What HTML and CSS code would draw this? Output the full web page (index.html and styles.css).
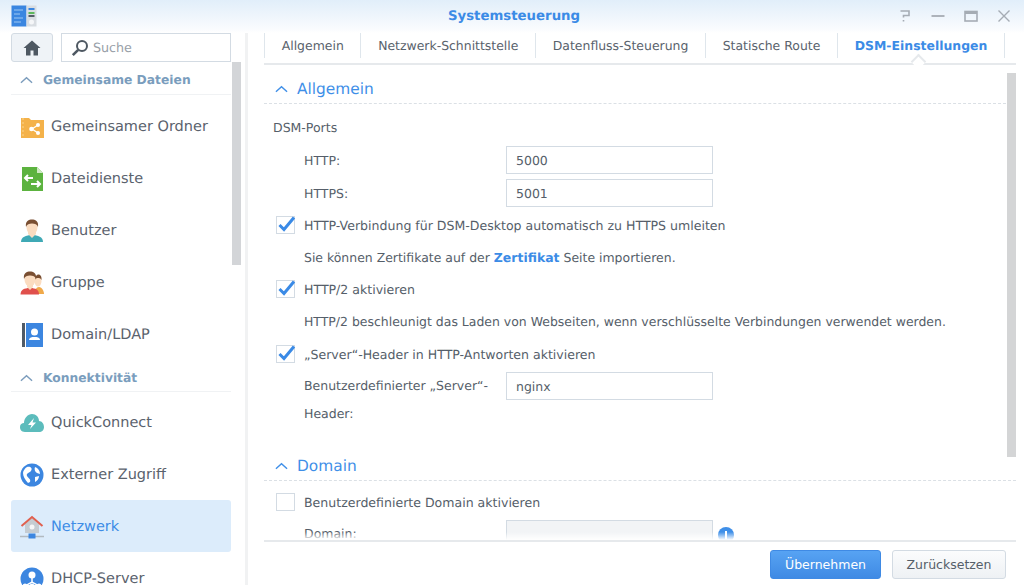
FILE: index.html
```html
<!DOCTYPE html>
<html lang="de">
<head>
<meta charset="utf-8">
<title>Systemsteuerung</title>
<link rel="stylesheet" href="styles.css">
</head>
<body>
<div class="window">
  <header class="titlebar">
    <svg class="app-icon" viewBox="0 0 26 22"><rect x="0.5" y="0.5" width="15" height="21" fill="#3a86e0"/><rect x="15.5" y="0.5" width="10" height="21" fill="#d8dde2"/><path d="M3 5h9M3 9h6M3 13h9M3 17h7" stroke="#9cc7f2" stroke-width="1"/><rect x="17.5" y="3" width="6" height="2" fill="#3a86e0"/><rect x="17.5" y="7" width="6" height="2" fill="#5cb85c"/><rect x="17.5" y="10" width="6" height="2" fill="#555e68"/><circle cx="20.5" cy="17" r="2.5" fill="#f4f6f8"/></svg>
    <h1 class="title">Systemsteuerung</h1>
    <div class="win-controls">
      <svg viewBox="0 0 14 14"><path d="M2.5 2H11V6.5H5.5V8.5M5.5 11V12.5" fill="none" stroke="#a5acb4" stroke-width="1.6"/></svg>
      <svg viewBox="0 0 14 14"><path d="M0.5 7H13.5" stroke="#a5acb4" stroke-width="1.8"/></svg>
      <svg viewBox="0 0 14 14"><rect x="1" y="2.5" width="12" height="9.5" fill="none" stroke="#a5acb4" stroke-width="1.6"/><rect x="1" y="2" width="12" height="3" fill="#a5acb4"/></svg>
      <svg viewBox="0 0 14 14"><path d="M1.5 1.5L12.5 12.5M12.5 1.5L1.5 12.5" stroke="#a5acb4" stroke-width="1.4"/></svg>
    </div>
  </header>

  <div class="body">
    <aside class="sidebar">
      <div class="toolbar">
        <button class="home-btn" aria-label="Start"><svg viewBox="0 0 18 16"><path d="M9 0.5L0.5 8H3V15.5H7.5V10.5H10.5V15.5H15V8H17.5Z" fill="#4e5862"/></svg></button>
        <div class="search">
          <svg viewBox="0 0 18 18"><circle cx="11" cy="7" r="5" fill="none" stroke="#4e5862" stroke-width="2"/><path d="M7.2 10.8L1.8 16.2" stroke="#4e5862" stroke-width="2.6"/></svg>
          <span>Suche</span>
        </div>
      </div>
      <div class="scroll-thumb side-thumb"></div>
      <nav class="nav">
        <div class="nav-head first"><svg class="chev" viewBox="0 0 14 8"><path d="M1 7L7 1.5L13 7" fill="none" stroke="#7b9cbc" stroke-width="1.5"/></svg>Gemeinsame Dateien</div>
        <a class="nav-item"><svg viewBox="0 0 24 24"><path d="M1 3H9L11 5H24V23H1Z" fill="#f4b24a"/><path d="M3 3V23" stroke="#fbd68c" stroke-dasharray="2 2"/><path d="M18 10L12 14L18 18" fill="none" stroke="#fff" stroke-width="1.3"/><circle cx="11.5" cy="14" r="2.3" fill="#fff"/><circle cx="18" cy="10" r="2" fill="#fff"/><circle cx="18" cy="18" r="2" fill="#fff"/></svg>Gemeinsamer Ordner</a>
        <a class="nav-item"><svg viewBox="0 0 24 24"><path d="M2 0H17L23 6V24H2Z" fill="#5cb33f"/><path d="M17 0V6H23Z" fill="#cfe9c3"/><path d="M5 11H13M8 8L5 11L8 14M20 17H11M17 14L20 17L17 20" fill="none" stroke="#fff" stroke-width="2"/></svg>Dateidienste</a>
        <a class="nav-item"><svg viewBox="0 0 24 24"><path d="M1 23C1 18 6 16 12 16S23 18 23 23Z" fill="#3fa9b5"/><path d="M8 15L12 19L16 15L16 12H8Z" fill="#fbdcc0"/><ellipse cx="12" cy="8.500" rx="5.500" ry="7" fill="#fbdcc0"/><path d="M6 8C5 2 9 0.500 12 0.500S19 2 18 8C17 5 15 4.500 12 4.500S7 5 6 8Z" fill="#7a4f32"/></svg>Benutzer</a>
        <a class="nav-item"><svg viewBox="0 0 24 24"><path d="M15 23C15 19 16 16 19 16C22 16 24 20 24 23Z" fill="#f0a94a"/><ellipse cx="18" cy="10" rx="3.500" ry="5.500" fill="#fbdcc0"/><path d="M15 9C15 5 17 3.500 18.500 3.500S22 5 21.500 9C20.500 7 19 7 18 7S16 7 15 9Z" fill="#7a4f32"/><path d="M0.500 23.500C0.500 19 4 17 10 17S19 19 19 23.500Z" fill="#e0504c"/><path d="M7 16L10 19L13 16V13H7Z" fill="#fbdcc0"/><ellipse cx="10" cy="8.500" rx="5.500" ry="7" fill="#fbdcc0"/><path d="M4 8C3 2 7 0.500 10 0.500S17 2 16 8C15 5 13 4.500 10 4.500S5 5 4 8Z" fill="#7a4f32"/></svg>Gruppe</a>
        <a class="nav-item"><svg viewBox="0 0 24 24"><rect x="2" y="0" width="3" height="24" fill="#505a66"/><rect x="6" y="0" width="17" height="24" fill="#3c86e0"/><circle cx="14.500" cy="9" r="3.500" fill="#fff"/><path d="M9 17C9 14.500 12 14 14.500 14S20 14.500 20 17Z" fill="#fff"/></svg>Domain/LDAP</a>
        <div class="nav-head"><svg class="chev" viewBox="0 0 14 8"><path d="M1 7L7 1.500L13 7" fill="none" stroke="#7b9cbc" stroke-width="1.5"/></svg>Konnektivität</div>
        <a class="nav-item"><svg viewBox="0 0 24 24"><path d="M5 21C1 21 0 18 0 16C0 13 2 12 4 12C4 7 8 3 12 3C16 3 19 6 19 10C22 10 24 13 24 16C24 19 22 21 19 21Z" fill="#5cbcbc"/><path d="M14 7L8 14H11.500L10 18L16 11.500H12.500Z" fill="#fff"/></svg>QuickConnect</a>
        <a class="nav-item"><svg viewBox="0 0 24 24"><circle cx="12" cy="12" r="11.500" fill="#3c86e0"/><path d="M7 4C10 3 13 5 11 8C9 10 6 10 7 13C9 16 11 16 10 19L8 20C5 17 3 13 3 10C3 8 5 5 7 4ZM15 4C18 5 20 8 20 11L17 10C15 9 14 6 15 4ZM15 14L19 13C19 16 17 18 15 19Z" fill="#fff"/></svg>Externer Zugriff</a>
        <a class="nav-item active"><svg viewBox="0 0 24 24"><path d="M5 9V18H19V9L12 3Z" fill="#c5ccd2"/><path d="M1.500 11L12 2L22.500 11" fill="none" stroke="#e0604f" stroke-width="2"/><circle cx="12" cy="12" r="2.500" fill="#f4f6f8"/><path d="M0 21.500H24" stroke="#b2bac0" stroke-width="1.500"/><rect x="8.500" y="18.500" width="7" height="5" fill="#3c86e0"/></svg>Netzwerk</a>
        <a class="nav-item"><svg viewBox="0 0 24 24"><circle cx="12" cy="12" r="11.500" fill="#3c86e0"/><circle cx="12" cy="8" r="3.500" fill="#fff"/><path d="M12 11V16M5 19L12 15L19 19" stroke="#fff" stroke-width="1.500" fill="none"/><circle cx="5" cy="19" r="2.500" fill="#fff"/><circle cx="12" cy="19" r="2.500" fill="#fff"/><circle cx="19" cy="19" r="2.500" fill="#fff"/></svg>DHCP-Server</a>
      </nav>
    </aside>

    <main class="main">
      <div class="tabs">
        <a class="tab">Allgemein</a>
        <a class="tab">Netzwerk-Schnittstelle</a>
        <a class="tab">Datenfluss-Steuerung</a>
        <a class="tab">Statische Route</a>
        <a class="tab tab-active">DSM-Einstellungen</a>
      </div>

      <div class="content">
        <div class="scroll-thumb main-thumb"></div>
        <section class="section">
          <h2 class="sec-head"><svg class="chev" viewBox="0 0 14 8"><path d="M1 7L7 1.500L13 7" fill="none" stroke="#3f8fe8" stroke-width="1.500"/></svg>Allgemein</h2>
          <div class="sub">DSM-Ports</div>
          <div class="field"><label>HTTP:</label><div class="input">5000</div></div>
          <div class="field tight"><label>HTTPS:</label><div class="input">5001</div></div>
          <div class="check"><span class="box on"><svg viewBox="0 0 20 18"><path d="M3.500 9L8 13.500L18 1.500" fill="none" stroke="#3a8ae6" stroke-width="3"/></svg></span>HTTP-Verbindung für DSM-Desktop automatisch zu HTTPS umleiten</div>
          <p class="note">Sie können Zertifikate auf der <b>Zertifikat</b> Seite importieren.</p>
          <div class="check"><span class="box on"><svg viewBox="0 0 20 18"><path d="M3.500 9L8 13.500L18 1.500" fill="none" stroke="#3a8ae6" stroke-width="3"/></svg></span>HTTP/2 aktivieren</div>
          <p class="note">HTTP/2 beschleunigt das Laden von Webseiten, wenn verschlüsselte Verbindungen verwendet werden.</p>
          <div class="check last"><span class="box on"><svg viewBox="0 0 20 18"><path d="M3.500 9L8 13.500L18 1.500" fill="none" stroke="#3a8ae6" stroke-width="3"/></svg></span>„Server“-Header in HTTP-Antworten aktivieren</div>
          <div class="field multi"><label>Benutzerdefinierter „Server“-Header:</label><div class="input">nginx</div></div>
        </section>
        <section class="section second">
          <h2 class="sec-head"><svg class="chev" viewBox="0 0 14 8"><path d="M1 7L7 1.500L13 7" fill="none" stroke="#3f8fe8" stroke-width="1.500"/></svg>Domain</h2>
          <div class="check"><span class="box"></span>Benutzerdefinierte Domain aktivieren</div>
          <div class="field domain"><label>Domain:</label><div class="input disabled"></div><span class="info"></span></div>
        </section>
      </div>

      <footer class="footer">
        <button class="btn primary">Übernehmen</button>
        <button class="btn">Zurücksetzen</button>
      </footer>
    </main>
  </div>
</div>
</body>
</html>
```

FILE: styles.css
```css
* { box-sizing: border-box; }
html, body { margin: 0; height: 585px; overflow: hidden; background: #fff; }
body { font-family: "DejaVu Sans", Verdana, sans-serif; color: #555e69; text-rendering: geometricPrecision; }

.window { display: flex; flex-direction: column; height: 585px; }

.titlebar {
  position: relative;
  flex: 0 0 33px;
  display: flex;
  align-items: flex-start;
  justify-content: center;
  background: linear-gradient(#e1eefa, #fafcfe 90%, #fff);
}
.app-icon { position: absolute; left: 11px; top: 5px; width: 26px; height: 22px; }
.title { margin: 8px 0 0; padding-left: 4px; font-size: 13.3px; line-height: 17px; font-weight: 700; color: #3b8be6; }
.win-controls { position: absolute; left: 898px; top: 9px; display: flex; gap: 19px; }
.win-controls svg { width: 14px; height: 14px; }

.body { flex: 1; display: flex; min-height: 0; }

.sidebar {
  position: relative;
  flex: 0 0 248px;
  padding-left: 11px;
  overflow: hidden;
  border-right: 3px solid #f1f2f3;
}
.toolbar { display: flex; gap: 8px; width: 220px; }
.home-btn {
  flex: 0 0 42px; height: 29px; padding: 0;
  display: flex; align-items: center; justify-content: center;
  background: #eff3f7; border: 1px solid #d3dbe3; border-radius: 3px;
}
.home-btn svg { width: 18px; height: 16px; }
.search {
  flex: 1; height: 29px;
  display: flex; align-items: center; gap: 4px; padding-left: 9px;
  border: 1px solid #d3dbe3; font-size: 12.7px; color: #98a0a8;
}
.search svg { width: 18px; height: 18px; }

.scroll-thumb { position: absolute; background: #d3d5d8; width: 9px; }
.side-thumb { left: 232px; top: 29px; height: 203px; }
.main-thumb { left: 743px; top: 8px; height: 384px; background: #d4d5d6; }

.nav { width: 220px; }
.nav-head {
  height: 32px; margin-bottom: 4px;
  display: flex; align-items: center; gap: 10px; padding: 4px 0 0 9px;
  border-bottom: 1px solid #f0f2f4;
  font-size: 12.3px; font-weight: 700; color: #7a9dbd;
}
.nav-head.first { height: 33px; margin-bottom: 5px; }
.nav-head .chev { width: 13px; height: 8px; }
.nav-item {
  height: 52px;
  display: flex; align-items: center; gap: 7px; padding: 1px 0 0 9px;
  font-size: 14.5px; color: #5a626d; border-radius: 3px;
}
.nav-item svg { flex: 0 0 24px; width: 24px; height: 24px; }
.nav-item.active { background: #dcecfb; color: #3e8ce6; }

.main { flex: 1; display: flex; flex-direction: column; min-width: 0; padding-left: 16px; }

.tabs { position: relative; flex: 0 0 32px; display: flex; align-items: flex-start; border-bottom: 2px solid #e6e9ec; width: 752px; }
.tab {
  height: 25px; padding: 0 16.7px;
  display: flex; align-items: center;
  font-size: 12.45px; color: #59626c;
  border-left: 1px solid #dfe6ec;
}
.tab-active { position: relative; color: #3b8be6; font-weight: 700; border-right: 1px solid #dfe6ec; }
.tab-active::after {
  content: ""; position: absolute; left: 75px; top: 23px;
  width: 9px; height: 9px; background: #fff;
  border-top: 2px solid #e6e9ec; border-left: 2px solid #e6e9ec;
  transform: rotate(45deg);
}

.content { position: relative; flex: 1; min-height: 0; overflow: hidden; width: 752px; }
.content::after {
  content: ""; position: absolute; left: 0; right: 0; bottom: 0; height: 8px;
  background: linear-gradient(rgba(255,255,255,0), #fff);
}
.section { padding: 0; }
.second { margin-top: 14px; }
.sec-head {
  height: 39px; margin: 0;
  display: flex; align-items: center; gap: 9px;
  padding: 9px 0 0 11px;
  font-size: 15.4px; font-weight: 400; color: #3f8fe8;
  border-bottom: 1px dashed #dbe0e5;
}
.sec-head .chev { width: 13px; height: 8px; }

.sub { margin-top: 15px; padding-left: 9px; font-size: 12.5px; line-height: 18px; }
.field { display: flex; align-items: center; margin-top: 9px; padding-left: 40px; font-size: 12.5px; }
.field.tight { margin-top: 5px; }
.field label { flex: 0 0 202px; }
.input {
  width: 207px; height: 28px; padding-left: 9px;
  display: flex; align-items: center;
  border: 1px solid #d3dbe3; color: #555e69; font-size: 12.5px;
}
.input.disabled { background: #f2f4f6; flex: none; }

.check { display: flex; align-items: center; gap: 9px; margin-top: 9px; padding-left: 12px; height: 18px; font-size: 12.55px; }
.box { flex: 0 0 19px; min-width: 0; height: 18px; border: 1px solid #d3dbe3; }
.box svg { display: block; width: 20px; height: 18px; margin: -1px 0 0 -1px; }
.note { margin: 15px 0 0; padding-left: 40px; font-size: 12.46px; line-height: 18px; }
.note b { color: #3b8be6; }
.note + .check { margin-top: 13px; }
.note + .check.last { margin-top: 14px; }
.field.multi { margin-top: 9px; align-items: flex-start; }
.field.multi label { line-height: 28px; padding-right: 14px; }
.section.second .check { margin-top: 12px; }
.field.domain { margin-top: 9px; align-items: flex-start; }
.field.domain label { line-height: 28px; }
.info { position: relative; flex: 0 0 16px; height: 16px; margin: 7px 0 0 5px; border-radius: 50%; background: #3f8fe8; }
.info::before { content: ""; position: absolute; left: 7px; top: 4px; width: 2px; height: 8px; background: #fff; }

.footer {
  flex: 0 0 45px; width: 752px;
  display: flex; justify-content: flex-end; gap: 11px; padding: 8px 10px 0 0;
  border-top: 2px solid #e6e9ec;
}
.btn {
  width: 114px; height: 29px; padding: 0;
  font-family: inherit; font-size: 12.5px; color: #555e69;
  background: linear-gradient(#fbfcfd, #eef1f4);
  border: 1px solid #d3dbe3; border-radius: 3px;
}
.btn.primary {
  width: 111px; color: #fff;
  background: linear-gradient(#57a3f3, #3f8ae4);
  border-color: #3f8ae4;
}
```
